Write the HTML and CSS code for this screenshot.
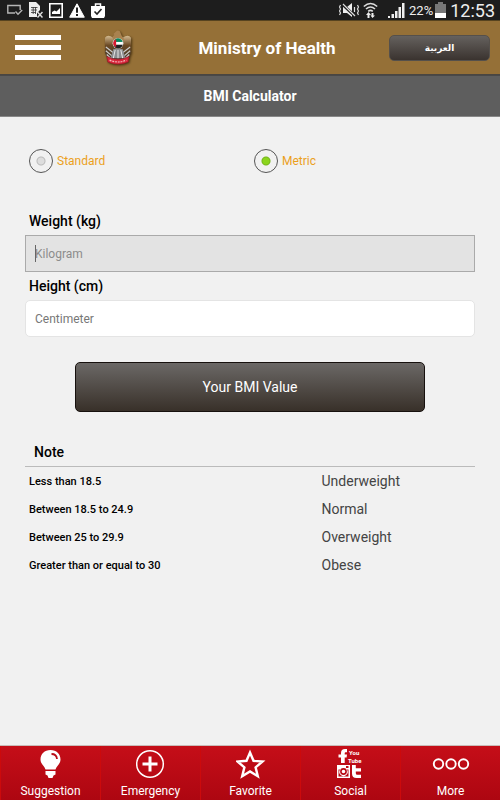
FILE: index.html
```html
<!DOCTYPE html>
<html lang="en">
<head>
<meta charset="utf-8">
<meta name="viewport" content="width=device-width, initial-scale=1">
<title>BMI Calculator</title>
<link rel="stylesheet" href="styles.css">
</head>
<body>
<div class="status">
  <div class="status-group status-left">
    <svg width="16" height="14" viewBox="0 0 16 14" fill="none" stroke="#b5b5b5" stroke-width="1.4"><path d="M8 10H.8V2.500h12.400V7M8.500 8.500l2.500 2.800L15.200 7"/></svg>
    <svg width="14" height="16" viewBox="0 0 14 16"><path fill="#eee" d="M0 0h7l4 4v4l-3 3v4H0z"/><path d="M2 5.500h6.500M2 8h6M2 10.500h5M4.200 5v7M6.500 5v7" stroke="#333" stroke-width=".8"/><path d="M8.500 10l5 5.500M13.500 10l-5 5.500" stroke="#ddd" stroke-width="1.500"/></svg>
    <svg width="14" height="15" viewBox="0 0 14 15"><path fill="none" stroke="#fff" stroke-width="1.600" d="M.8.800h12.400v13.400H.8z"/><path fill="#fff" d="M3 11V9l2.500-1.500 2 1L11 5v6z"/></svg>
    <svg width="16" height="15" viewBox="0 0 16 15"><path fill="#fff" stroke="#fff" stroke-linejoin="round" d="M8 .8l7.300 13.400H.7z"/><path d="M8 4.500v5.200M8 11v2" stroke="#1d1d1d" stroke-width="2"/></svg>
    <svg width="14" height="15" viewBox="0 0 14 15"><path fill="#fff" d="M0 3h14v10l-1 2H1l-1-2z"/><path fill="none" stroke="#fff" stroke-width="1.500" d="M4.500 3.500V1h5v2.500"/><path fill="none" stroke="#222" stroke-width="1.600" d="M3.500 8.500L6 11l4.500-5"/></svg>
  </div>
  <div class="status-group">
    <svg width="20" height="14" viewBox="0 0 20 14"><path fill="#eee" d="M4 4h4l5-4v14L8 10H4z"/><path d="M3 1l13 12" stroke="#1d1d1d" stroke-width="3"/><path d="M4 1l12 12M1.500 2l-1 2 1 2-1 2 1 2-1 2M18.500 2l1 2-1 2 1 2-1 2 1 2M15.500 4v5" fill="none" stroke="#ddd" stroke-width="1.200"/></svg>
    <svg class="wifi" width="15" height="16" viewBox="0 0 15 16"><path d="M.8 4.500q6.700-6 13.400 0M3 7q4.500-4 9 0M5.200 9.300q2.300-2 4.600 0" fill="none" stroke="#ddd" stroke-width="1.600"/><path fill="#eee" d="M5.500 10L8 13H6.500v3h-2v-3H3zM8.500 11h2v2.500H12L9.500 16 7.500 13.500h1z"/></svg>
    <svg width="17" height="15" viewBox="0 0 17 15" fill="#eee"><path d="M0 13h2v2H0zM3.500 11h2.500v4H3.500zM7 8h2.500v7H7zM10.500 4H13v11h-2.500zM14 0h2.500v15H14z"/></svg>
    <span class="percent">22%</span>
    <svg width="11" height="16" viewBox="0 0 11 16"><path fill="#777" d="M3 0h5v2h3v9H0V2h3z"/><path fill="#fff" d="M0 11h11v5H0z"/></svg>
    <time class="clock">12:53</time>
  </div>
</div>

<header class="header">
  <button class="menu" type="button" aria-label="Menu"><i></i><i></i><i></i></button>
  <svg class="emblem" width="28" height="36" viewBox="0 0 30 38">
    <defs><linearGradient id="wing" x2="0" y2="1"><stop stop-color="#dcc49a"/><stop offset=".4" stop-color="#6b4a25"/><stop offset="1" stop-color="#3e372d"/></linearGradient></defs>
    <path fill="url(#wing)" d="M10 8Q4 4 1 8v16l4 9h20l4-9V8Q26 4 20 8L17 5h-4z"/>
    <path fill="#a9824f" d="M9 7l2-2-1-1 2-2q2-3 5-1l2 5 3 4-5 2-7-1z"/>
    <path fill="none" stroke="#ccc" stroke-width="1.300" d="M2 18l8 6M2 22l7 6M3 26l5 5M28 18l-8 6M28 22l-7 6M27 26l-5 5"/>
    <path fill="#8b8d90" d="M10 20h10l3 10H7z"/>
    <path stroke="#eee" d="M12 21l-2 9M15 21v9M18 21l2 9"/>
    <circle cx="15" cy="14" r="5.800" fill="#ddd"/>
    <path fill="#07885c" d="M11 10.500q4-4 8 0l1 2h-9z"/><path fill="#fff" d="M11 12.500h9v3h-9z"/><path fill="#222" d="M11 15.500h9q-1 4-5 4-3 0-4-2z"/><path fill="#d9182d" d="M13 9.500q-4 2-3 6l3 3z"/>
    <path fill="#d6263a" stroke="#8d1522" stroke-width=".6" d="M3 28q12 6 24 0l-1 6q-11 5-22 0z"/>
    <path d="M6 32q9 4 18 0" fill="none" stroke="#f4b5b9" stroke-width="1.300" stroke-dasharray="2 1"/>
  </svg>
  <h1 class="brand">Ministry of Health</h1>
  <button class="language" type="button" lang="ar">العربية</button>
</header>
<h2 class="page-title">BMI Calculator</h2>

<main class="content">
  <form>
    <div class="units" role="radiogroup" aria-label="Units">
      <label class="unit"><input type="radio" name="units">Standard</label>
      <label class="unit"><input type="radio" name="units" checked>Metric</label>
    </div>
    <label class="field-label" for="weight">Weight (kg)</label>
    <div class="field-box">
      <input class="field focused" id="weight" type="text" placeholder="Kilogram">
      <span class="caret"></span>
    </div>
    <label class="field-label" for="height">Height (cm)</label>
    <input class="field" id="height" type="text" placeholder="Centimeter">
    <button class="submit" type="button">Your BMI Value</button>
  </form>
  <h3 class="note">Note</h3>
  <table class="ranges">
    <tr><th scope="row">Less than 18.5</th><td>Underweight</td></tr>
    <tr><th scope="row">Between 18.5 to 24.9</th><td>Normal</td></tr>
    <tr><th scope="row">Between 25 to 29.9</th><td>Overweight</td></tr>
    <tr><th scope="row">Greater than or equal to 30</th><td>Obese</td></tr>
  </table>
</main>

<nav class="tabs">
  <a class="tab" href="#suggestion">
    <svg width="30" height="30" viewBox="0 0 30 30"><path fill="#fff" d="M14.500 1C8.500 1 4.500 5 4.500 10.500c0 4.500 4 6.500 5 10h10c1-3.500 5-5.500 5-10C24.500 5 20.500 1 14.500 1z"/><path fill="#fff" d="M9.500 22h10v3.500l-2 1-1 2.500h-4l-1-2.500-2-1z"/><path d="M15.500 5q5 0 5.500 5" fill="none" stroke="#b80c18" stroke-width="1.800"/></svg>
    <span>Suggestion</span>
  </a>
  <a class="tab" href="#emergency">
    <svg width="30" height="30" viewBox="0 0 30 30" fill="none" stroke="#fff"><circle cx="14" cy="15" r="13.300" stroke-width="1.500"/><path stroke-width="3" d="M6.500 15h15M14 7.500v15"/></svg>
    <span>Emergency</span>
  </a>
  <a class="tab" href="#favorite">
    <svg width="30" height="30" viewBox="0 0 30 30" fill="none" stroke="#fff" stroke-width="2.400"><path d="M14 3.500l3.500 8.300 9 .7-6.900 5.900 2.200 8.800L14 22.500l-7.800 4.700 2.200-8.800-6.900-5.900 9-.7z"/></svg>
    <span>Favorite</span>
  </a>
  <a class="tab" href="#social">
    <svg width="30" height="30" viewBox="0 0 30 30" fill="#fff"><path d="M5 14V8.500H2.500V5.500H5V4q0-4 4-4h2v3.200H9.500Q8.700 3.200 8.700 4.200v1.300h2.300l-.4 3H8.700V14z"/><text class="tube" x="13" y="6">You</text><text class="tube" x="12" y="14">Tube</text><path fill-rule="evenodd" d="M1 16h13v13H1zM2.500 20.500v7h10v-7h-1.500a4.200 4.200 0 1 1-7 0zM10 17v2h2.500v-2z"/><circle cx="7.500" cy="22.500" r="2.600" fill="none" stroke="#b80a15" stroke-width="1.600"/><path d="M16 16h3.800v3.200H25v3.300h-5.200v1.700q0 1.500 1.500 1.500H25V29h-4.500q-4.500 0-4.500-4.500z"/></svg>
    <span>Social</span>
  </a>
  <a class="tab" href="#more">
    <svg width="38" height="30" viewBox="0 0 38 30" fill="none" stroke="#fff" stroke-width="1.900"><circle cx="6.500" cy="15" r="4.700"/><circle cx="19" cy="15" r="4.700"/><circle cx="31.500" cy="15" r="4.700"/></svg>
    <span>More</span>
  </a>
</nav>
</body>
</html>
```
FILE: styles.css
```css
* {
  box-sizing: border-box;
}

body {
  margin: 0;
  min-height: 100vh;
  display: flex;
  flex-direction: column;
  background: #f1f1f1;
  color: #000;
  font-family: Roboto, "Noto Sans", "DejaVu Sans", sans-serif;
}

button {
  font-family: inherit;
  cursor: pointer;
}

.status {
  height: 20px;
  padding: 0 5px 0 7px;
  display: flex;
  justify-content: space-between;
  background: #1d1d1d;
  color: #eee;
}

.status-group {
  display: flex;
  align-items: center;
  gap: 4px;
}

.status-left {
  gap: 6px;
}

.wifi {
  margin-right: 6px;
}

.percent {
  margin-right: -2px;
  font-size: 13px;
}

.clock {
  font-size: 18px;
}

.header {
  height: 55px;
  padding: 0 10px 0 15px;
  display: grid;
  grid-template-columns: 46px 74px 1fr 101px;
  align-items: center;
  background: #957037;
  border-top: 1px solid #57431f;
  border-bottom: 1px solid #4a4641;
  box-shadow: 0 1px 1px #4a4a4a;
}

.menu {
  display: grid;
  gap: 5px;
  padding: 0;
  border: 0;
  background: none;
}

.menu i {
  height: 5px;
  background: #fff;
}

.emblem {
  justify-self: end;
  margin-right: 3px;
  filter: drop-shadow(1px 1px 1px #4b3512);
}

.brand {
  margin: 0;
  padding-left: 10px;
  color: #fff;
  font-size: 17px;
  font-weight: 700;
  text-align: center;
}

.language {
  height: 26px;
  border: 1px solid #55504b;
  border-radius: 5px;
  background: linear-gradient(#65615e, #3a332f);
  color: #fff;
  font-family: "DejaVu Sans", sans-serif;
  font-size: 9px;
  font-weight: 700;
}

.page-title {
  margin: 0;
  color: #fff;
  background: #5e5e5e;
  border-top: 1px solid #494949;
  border-bottom: 1px solid #888;
  font-size: 14px;
  font-weight: 700;
  line-height: 40px;
  text-align: center;
}

.content {
  padding: 32px 25px 20px;
}

.units {
  display: grid;
  grid-template-columns: 1fr 1fr;
  margin-bottom: 34px;
}

.unit {
  display: flex;
  align-items: center;
  gap: 4px;
  padding-left: 4px;
  color: #eba01c;
  font-size: 12px;
}

.unit input {
  appearance: none;
  width: 24px;
  height: 24px;
  margin: 0;
  border: 1px solid #555;
  border-radius: 50%;
  background: radial-gradient(circle, #ddd 3px, #bbb 4px, transparent 5px);
}

.unit input:checked {
  background: radial-gradient(circle, #8bd51c 3px, #76b51d 4px, transparent 5px);
}

.field-label {
  display: block;
  padding-left: 4px;
  font-size: 14px;
  font-weight: 500;
  line-height: 28px;
}

.field-box {
  position: relative;
}

.field {
  display: block;
  width: 100%;
  height: 37px;
  padding: 0 9px;
  border: 1px solid #e4e4e4;
  border-radius: 5px;
  background: #fff;
  color: #333;
  font-family: inherit;
  font-size: 12px;
}

.field::placeholder {
  color: #777;
  opacity: 1;
}

.focused {
  border-color: #aaa;
  border-radius: 0;
  background: #e3e3e3;
}

.focused::placeholder {
  color: #8c8c8c;
}

.caret {
  position: absolute;
  left: 10px;
  top: 10px;
  width: 1px;
  height: 17px;
  background: #666;
}

.submit {
  display: block;
  width: calc(100% - 100px);
  height: 50px;
  margin: 25px auto 0;
  border: 1px solid #17110e;
  border-radius: 5px;
  background: linear-gradient(#6b6866, #383029);
  color: #fff;
  font-size: 14px;
}

.note {
  margin: 26px 0 0;
  padding-left: 9px;
  border-bottom: 1px solid #bbb;
  font-size: 14px;
  font-weight: 500;
  line-height: 28px;
}

.ranges {
  width: 100%;
  table-layout: fixed;
  border-collapse: collapse;
}

.ranges th,
.ranges td {
  height: 28px;
  padding: 0 0 0 4px;
  text-align: left;
}

.ranges th {
  width: 65%;
  font-size: 11px;
  font-weight: 500;
}

.ranges td {
  color: #444;
  font-size: 14px;
}

.tabs {
  margin-top: auto;
  display: grid;
  grid-template-columns: repeat(5, 1fr);
  border-top: 1px solid #c9bcb8;
  background: linear-gradient(#c50e18, #ad0611);
}

.tab {
  height: 54px;
  padding-top: 3px;
  display: flex;
  flex-direction: column;
  align-items: center;
  border-left: 1px solid #cc0a0c;
  color: #fff;
  font-size: 12px;
  line-height: 24px;
  text-decoration: none;
}

.tab svg {
  flex: none;
}

.tube {
  font-size: 6px;
  font-weight: 700;
}
```
